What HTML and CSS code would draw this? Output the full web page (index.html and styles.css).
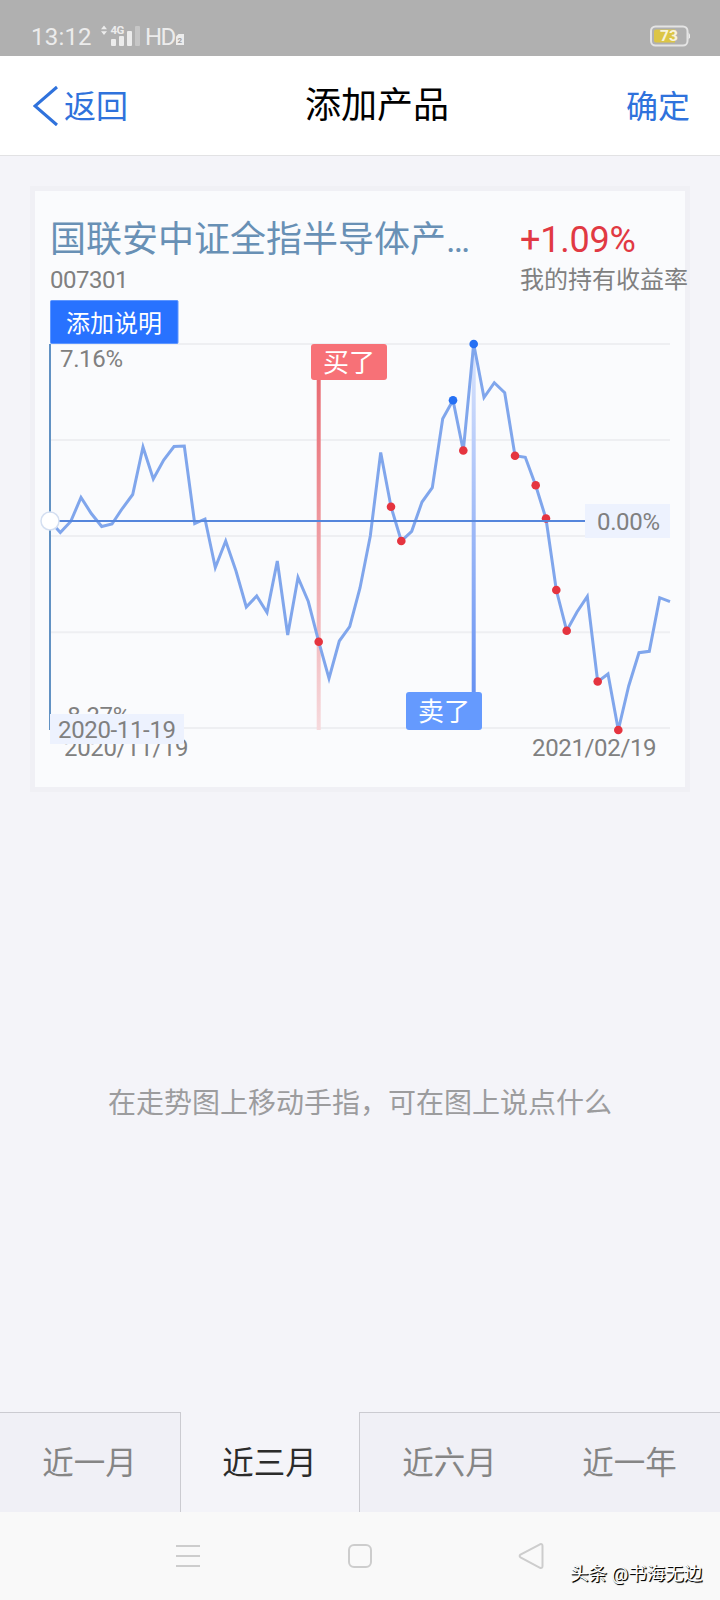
FILE: index.html
```html
<!DOCTYPE html>
<html lang="zh-CN">
<head>
<meta charset="utf-8">
<title>添加产品</title>
<link rel="stylesheet" href="styles.css">
</head>
<body>
<div class="screen">
  <div class="status">
    <span class="clock">13:12</span>
    <svg class="signal" width="42" height="24" viewBox="0 0 42 24">
      <path d="M3 5.2 6 1.5 9 5.2ZM3 7.3 6 11 9 7.3Z" class="lit"/>
      <text x="12.5" y="10" class="net">4G</text>
      <rect x="13" y="15" width="5" height="7" rx="1" class="lit"/>
      <rect x="21" y="12" width="5" height="10" rx="1" class="lit"/>
      <rect x="29" y="7" width="5" height="15" rx="1" class="lit"/>
      <rect x="37" y="2" width="5" height="20" rx="1" class="dim"/>
    </svg>
    <span class="hd">HD</span>
    <svg class="sim" width="8" height="11" viewBox="0 0 8 11">
      <path d="M2.500 0H8V11H0V2.500Z" class="lit"/>
      <text x="1.500" y="9" class="simno">2</text>
    </svg>
    <svg class="battery" width="41" height="23" viewBox="0 0 41 23">
      <rect x="1" y="1.500" width="36.500" height="19" rx="4.500" class="shell"/>
      <path d="M38.500 7.500 40 9.500V12.500L38.500 14.500Z" class="lit"/>
      <path d="M6 4.500H25V17.500H6Q4 17.500 4 15.500V6.500Q4 4.500 6 4.500Z" class="charge"/>
      <text x="10" y="16.300" class="level">73</text>
    </svg>
  </div>

  <header class="nav">
    <a class="back">
      <svg width="26" height="42" viewBox="0 0 26 42"><path d="M24 2 2 21 24 40" class="chevron"/></svg>
      <span class="backtext">返回</span>
    </a>
    <h1 class="title">添加产品</h1>
    <a class="ok">确定</a>
  </header>

  <main class="content">
    <section class="card">
      <div class="head">
        <div class="fund">
          <div class="name">国联安中证全指半导体产…</div>
          <div class="code">007301</div>
        </div>
        <div class="gain">
          <div class="rate">+1.09%</div>
          <div class="label">我的持有收益率</div>
        </div>
      </div>
      <svg class="chart" width="650" height="490" viewBox="35 297 650 490">
        <defs>
          <linearGradient id="buyFade" x1="0" y1="0" x2="0" y2="1">
            <stop offset="0" stop-color="#e96a72"/><stop offset="1" stop-color="#f6dadd"/>
          </linearGradient>
          <linearGradient id="sellFade" x1="0" y1="0" x2="0" y2="1">
            <stop offset="0" stop-color="#dbe5fd"/><stop offset="1" stop-color="#6691f2"/>
          </linearGradient>
        </defs>
        <path class="grid" d="M50 344H670M50 440H670M50 536H670M50 632.300H670M50 728H670"/>
        <text class="axis" x="60" y="367">7.16%</text>
        <text class="axis" x="61" y="724">-8.37%</text>
        <text class="axis" x="64" y="756">2020/11/19</text>
        <text class="axis" x="532" y="756">2021/02/19</text>

        <rect x="316.700" y="379" width="4" height="351" fill="url(#buyFade)"/>
        <rect x="471.700" y="344" width="4" height="350" fill="url(#sellFade)"/>
        <polyline class="trend" points="50,521 60.300,532.500 70.700,521.500 81,497.500 91.300,513.500 101.700,526.500 112,524 122.300,508.500 132.700,494.500 143,447 153.300,479 163.700,460 174,446.500 184.300,446 194.700,523.500 205,519 215.300,567.500 225.700,541 236,571 246.300,607 256.700,596 267,612.500 277.300,561 287.700,635 298,577.500 308.300,601.500 318.700,641.700 329,678.500 339.300,641 349.700,626.700 360,588 370.300,536 380.700,452.500 391,506.700 401.300,541 411.700,531.300 422,502 432.300,487.700 442.700,418.700 453,400.300 463.300,450.600 473.700,344 484,397.500 494.300,382.700 504.700,392.700 515,455.700 525.300,457.300 535.700,485.500 546,518.700 556.300,590 566.700,630.700 577,612 587.300,596.500 597.700,681.700 608,674 618.300,730 628.700,686 639,652.700 649.300,651.300 659.700,597.700 670,601.700"/>
        <g class="buys">
          <circle cx="318.700" cy="641.700" r="4.300"/><circle cx="391" cy="506.700" r="4.300"/>
          <circle cx="401.300" cy="541" r="4.300"/><circle cx="463.300" cy="450.500" r="4.300"/>
          <circle cx="515" cy="455.700" r="4.300"/><circle cx="535.700" cy="485.300" r="4.300"/>
          <circle cx="546" cy="518.500" r="4.300"/><circle cx="556.300" cy="590" r="4.300"/>
          <circle cx="566.700" cy="630.700" r="4.300"/><circle cx="597.700" cy="681.500" r="4.300"/>
          <circle cx="618.300" cy="730" r="4.300"/>
        </g>
        <g class="sells"><circle cx="453" cy="400.300" r="4.300"/><circle cx="473.700" cy="344" r="4.300"/></g>

        <rect x="311" y="344" width="76" height="36" rx="3" class="buytag"/>
        <text x="323" y="372" class="tag">买了</text>
        <rect x="406" y="692" width="76" height="38" rx="3" class="selltag"/>
        <text x="418" y="721" class="tag">卖了</text>

        <path class="cursorx" d="M50 344V730"/>
        <path class="cursory" d="M50 521H586"/>
        <circle class="handle" cx="50" cy="521" r="9"/>
        <rect class="chip" x="585" y="504" width="85" height="34"/>
        <text class="axis" x="597" y="530">0.00%</text>
        <rect class="chip" x="50" y="714" width="134" height="30"/>
        <text class="axis" x="58" y="738">2020-11-19</text>
        <rect class="note" x="50.500" y="300.500" width="127.500" height="43" rx="1"/>
        <text class="notetext" x="66" y="332">添加说明</text>
      </svg>
    </section>
    <p class="hint">在走势图上移动手指，可在图上说点什么</p>
  </main>

  <div class="tabs">
    <div class="tab first">近一月</div>
    <div class="tab active">近三月</div>
    <div class="tab third">近六月</div>
    <div class="tab">近一年</div>
  </div>

  <footer class="system">
    <svg width="24" height="26" viewBox="0 0 24 26"><path class="key" d="M0 3H24M0 13H24M0 23H24"/></svg>
    <svg width="26" height="26" viewBox="0 0 26 26"><rect class="key" x="2" y="2" width="22" height="22" rx="5"/></svg>
    <svg width="26" height="28" viewBox="0 0 26 28"><path class="key" d="M22 2.300 2.500 12.500Q.8 14 2.500 15.300L22 25.800Q24.500 26.500 24.500 24V4Q24.500 1.500 22 2.300Z"/></svg>
    <span class="mark">头条 @书海无边</span>
  </footer>
</div>
</body>
</html>
```

FILE: styles.css
```css
body {
  margin: 0;
  font-family: Roboto, "Noto Sans CJK SC", sans-serif;
}

.screen {
  width: 720px;
  height: 1600px;
  display: flex;
  flex-direction: column;
  background: #f4f4f9;
  overflow: hidden;
}

.status {
  height: 56px;
  box-sizing: border-box;
  padding: 24px 29px 0 31px;
  display: flex;
  align-items: flex-start;
  background: #b0b0b0;
  color: #ececec;
}

.clock {
  width: 67px;
  font-size: 24px;
  line-height: 26px;
  letter-spacing: 0.2px;
}

.lit { fill: #ececec; }
.dim { fill: #c6c6c6; }
.net { font-size: 11.5px; font-weight: 700; fill: #ececec; letter-spacing: -0.5px; }

.hd {
  margin-left: 5px;
  font-size: 24px;
  line-height: 26px;
  letter-spacing: -1.5px;
}

.sim { margin: 10px 0 0 1px; }
.simno { font-size: 8px; font-weight: 700; fill: #a0a0a0; }
.battery { margin: 1px 0 0 auto; }
.shell { fill: none; stroke: #e4e4e4; stroke-width: 2; }
.charge { fill: #dcc545; }
.level { font-size: 15.5px; font-weight: 700; fill: #f7f3dc; }

.nav {
  height: 99px;
  display: flex;
  align-items: center;
  padding: 0 30px 0 33px;
  background: #fff;
  border-bottom: 1px solid #e2e2e4;
}

.back {
  width: 272px;
  display: flex;
  align-items: center;
  gap: 5px;
  color: #2f72dc;
  font-size: 32px;
  line-height: 48px;
}

.backtext { padding-top: 3px; }

.chevron { fill: none; stroke: #2f72dc; stroke-width: 3; }

.title {
  margin: 0;
  font-size: 36px;
  line-height: 48px;
  font-weight: 400;
  color: #000;
}

.ok {
  margin-left: auto;
  padding-top: 3px;
  color: #2f72dc;
  font-size: 32px;
  line-height: 48px;
}

.content { flex: 1; }

.card {
  width: 650px;
  height: 596px;
  margin: 30px 30px 0;
  border: 5px solid #f0f0f5;
  background: #fafbfd;
}

.head {
  height: 106px;
  display: flex;
  box-sizing: border-box;
  padding: 23px 0 0 15px;
}

.fund { flex: none; width: 470px; }

.name {
  font-size: 36px;
  line-height: 52px;
  color: #6890b5;
  white-space: nowrap;
}

.code {
  font-size: 24px;
  line-height: 28px;
  color: #808080;
  letter-spacing: -0.5px;
}

.rate {
  font-size: 36px;
  line-height: 52px;
  color: #e13943;
  letter-spacing: -0.2px;
}

.label {
  font-size: 24px;
  line-height: 28px;
  color: #808080;
  white-space: nowrap;
}

.chart { display: block; }
.grid { fill: none; stroke: #eeeff2; stroke-width: 2; }
.axis { font-size: 24px; fill: #808080; letter-spacing: -0.35px; }
.trend { fill: none; stroke: #80a6ec; stroke-width: 3; stroke-miterlimit: 4; }
.buys { fill: #e5343f; }
.sells { fill: #2570f4; }
.buytag { fill: #f77177; }
.selltag { fill: #659afe; }
.tag { font-size: 26px; fill: #fff; }
.cursorx { stroke: #6292c3; stroke-width: 2; }
.cursory { stroke: #5586dc; stroke-width: 2; }
.handle { fill: #fff; stroke: #d4dff1; stroke-width: 1.5; }
.chip { fill: #edf2fe; }
.note { fill: #2872ff; stroke: #5e96ff; stroke-width: 1; }
.notetext { font-size: 24px; fill: #fff; }

.hint {
  margin: 291px 0 0;
  text-align: center;
  font-size: 28px;
  line-height: 42px;
  color: #9c9c9e;
}

.tabs {
  height: 100px;
  display: grid;
  grid-template-columns: 181px 178px 181px 180px;
}

.tab {
  box-sizing: border-box;
  padding-right: 1px;
  border-top: 1px solid #cbcbd1;
  background: #f0f0f6;
  color: #858585;
  font-size: 31.5px;
  line-height: 101px;
  text-align: center;
}

.first { border-right: 1px solid #cbcbd1; }
.active { border-top-color: transparent; background: #f4f4f9; color: #2b2b2b; }
.third { border-left: 1px solid #cbcbd1; }

.system {
  height: 88px;
  display: grid;
  grid-template-columns: 171px 171px 26px;
  align-items: center;
  position: relative;
  padding-left: 176px;
  background: #f9f9f9;
}

.key { fill: none; stroke: #cdcdcd; stroke-width: 2; }

.mark {
  position: absolute;
  left: 570px;
  top: 49px;
  font-size: 18.5px;
  line-height: 26px;
  color: #fff;
  white-space: nowrap;
  text-shadow: 1px 1px 1px #000, 1px 1px 0 #222;
}
```
